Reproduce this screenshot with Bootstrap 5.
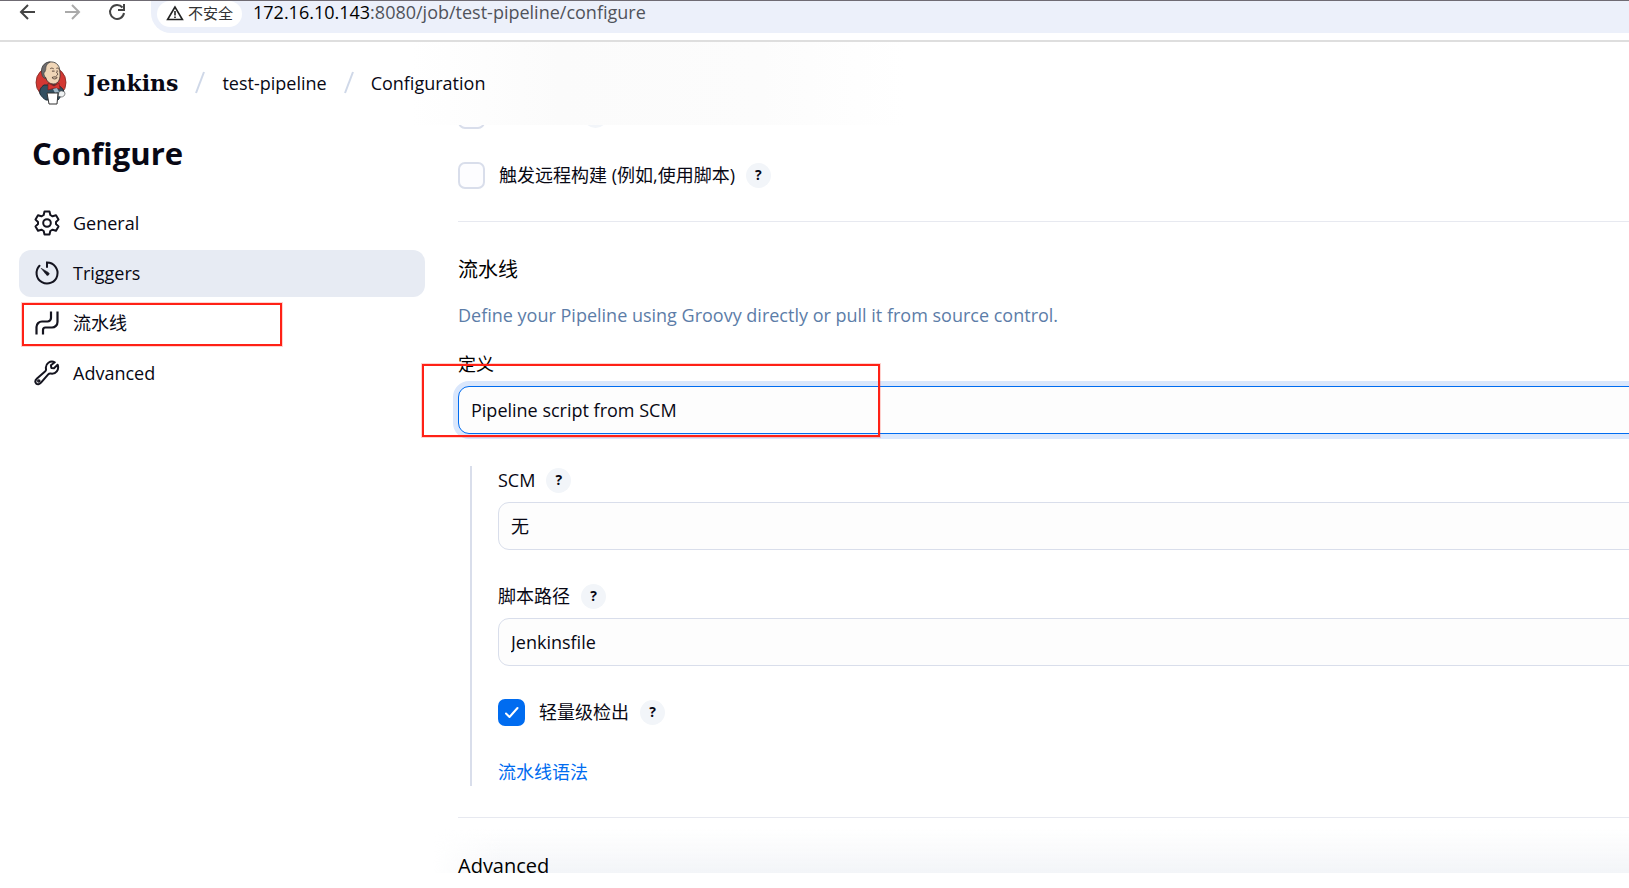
<!DOCTYPE html>
<html lang="zh-CN">
<head>
<meta charset="utf-8">
<meta name="viewport" content="width=device-width, initial-scale=1">
<title>test-pipeline Config [Jenkins]</title>
<link href="https://cdn.jsdelivr.net/npm/bootstrap@5.3.0/dist/css/bootstrap.min.css" rel="stylesheet">
<style>
  :root { --ink: #080814; --line: #d9deeb; --soft: #e7ebf3; --accent: #006cf0; --mark: #ff2116; }
  body { font-family: "Open Sans", "Noto Sans CJK SC", sans-serif; font-size: 18px; line-height: 28px; color: var(--ink); background: #fff; }
  svg { display: block; flex: none; }

  /* browser toolbar */
  .browser-bar { height: 42px; border-top: 1px solid #6f6b73; border-bottom: 2px solid #dedede; padding-left: 18px; }
  .browser-btn { padding: 0; border: 0; background: none; margin-right: 25px; }
  .omnibox { height: 32px; padding: 0 0 6px 6px; background: #ecf0fa; border-radius: 0 0 0 20px; }
  .site-chip { height: 26px; width: 85px; padding: 0 0 2px; border: 0; background: #fff; border-radius: 14px; font-size: 15px; color: #333; }
  .address { border: 0; background: none; outline: 0; font-size: 18px; line-height: 22px; color: #50535a; padding-left: 11px; }
  .address, .site-chip { font-family: inherit; }

  /* page header */
  .app-header { height: 83px; padding: 0 0 2px 35px; background: linear-gradient(90deg, #fff 410px, #fbfbfb 560px, #fcfcfc 760px, #fff 905px); }
  .brand-name { font-family: "DejaVu Serif", serif; font-weight: 700; font-size: 22px; margin-left: 19px; }
  .app-header a { color: var(--ink); }

  /* side navigation */
  .side { width: 425px; padding: 8px 0 0 19px; }
  .side h1 { font-size: 31px; line-height: 40px; font-weight: 700; padding-left: 13px; margin-bottom: 27px; }
  .side .nav { gap: 3px; }
  .side .nav-link { display: flex; align-items: center; gap: 13px; height: 47px; padding: 0 15px 1px; border-radius: 12px; color: var(--ink); }
  .side .nav-link.active { background: var(--soft); }
  .outline-mark { position: absolute; border: 2px solid var(--mark); box-shadow: 0 0 0 1px #ff211633; pointer-events: none; }
  .mark-nav { left: 3px; top: 3px; width: 260px; height: 43px; }
  .mark-field { left: -36px; top: 12px; width: 458px; height: 73px; }

  /* form */
  .content-pane { margin-left: -8px; }
  .form-area { padding-left: 41px; margin-right: -24px; }
  .first-row { margin-top: -24px; }
  .hidden-row-help { margin-left: 98px; }
  .setting-row { height: 28px; margin-bottom: 32px; }
  .setting-row label { margin: 0 11px 0 14px; }
  .form-check-input.box { width: 27px; height: 27px; margin: 0; border: 2px solid var(--line); border-radius: 7px; background-color: #fdfdff; flex: none; }
  .form-check-input.box:checked { background-color: var(--accent); border-color: var(--accent); background-image: url("data:image/svg+xml,%3csvg xmlns='http://www.w3.org/2000/svg' viewBox='0 0 23 23'%3e%3cpath fill='none' stroke='%23fff' stroke-width='2' stroke-linecap='round' stroke-linejoin='round' d='m6 12.500 3.500 3.500 8-9'/%3e%3c/svg%3e"); }
  .help-btn { width: 25px; height: 25px; padding: 0; border: 0; border-radius: 50%; background: #f2f5f9; color: var(--ink); font-size: 14px; line-height: 24px; font-weight: 700; flex: none; }
  .rule { height: 1px; background: #e7e9f0; }
  .form-area h2 { font-size: 20px; line-height: 24px; font-weight: 400; margin: 36px 0 21px; color: #000; }
  .hint { line-height: 24px; margin-bottom: 25px; color: #5c7da8; }
  .form-area .field { height: 48px; padding: 0 12px; font-size: 18px; color: var(--ink); border: 1px solid var(--line); border-radius: 11px; background: #fdfdfd; }
  .form-area .field.picked { border-color: var(--accent); box-shadow: 0 0 0 5px #dae7fc; }
  .def-label { line-height: 24px; margin-bottom: 10px; display: block; color: #000; }
  .nested { margin: 32px 0 31px 12px; padding-left: 26px; border-left: 2px solid var(--line); }
  .field-head { height: 28px; gap: 11px; margin-bottom: 8px; }
  .nested .field { margin-bottom: 32px; }
  .nested a { color: var(--accent); display: block; }
  .save-fade { position: absolute; left: 16px; right: 0; bottom: 0; height: 44px; background: linear-gradient(#f4f6f900, #f3f5f8); -webkit-mask-image: linear-gradient(90deg, transparent, #000 70px); mask-image: linear-gradient(90deg, transparent, #000 70px); pointer-events: none; }
  .page-end { height: 15px; }
</style>
</head>
<body class="d-flex flex-column vh-100 overflow-hidden">

<div class="browser-bar d-flex align-items-start flex-shrink-0">
  <button class="browser-btn" type="button" aria-label="Back"><svg width="20" height="22" viewBox="0 0 20 22" fill="none" stroke="#444" stroke-width="2"><path d="M17 11H3M10 4l-7 7 7 7"/></svg></button>
  <button class="browser-btn" type="button" aria-label="Forward"><svg width="20" height="22" viewBox="0 0 20 22" fill="none" stroke="#aaa" stroke-width="2"><path d="M2 11h14M9 4l7 7-7 7"/></svg></button>
  <button class="browser-btn" type="button" aria-label="Reload"><svg width="18" height="22" viewBox="0 0 18 22" fill="none" stroke="#444" stroke-width="2"><path d="M14.500 6.500A7 7 0 1 0 16 12M16 3v6h-6"/></svg></button>
  <div class="omnibox d-flex flex-grow-1">
    <button class="site-chip d-flex align-items-center justify-content-center" type="button"><svg class="me-1" width="18" height="16" viewBox="0 0 18 16" fill="none" stroke="#222" stroke-width="1.600"><path d="M9 2 1.600 14.500h14.800zM9 6v4.500M9 11.500v1.600"/></svg>不安全</button>
    <div class="address" role="textbox" aria-label="Address"><span class="text-black">172.16.10.143</span>:8080/job/test-pipeline/configure</div>
  </div>
</div>

<header class="app-header d-flex align-items-center flex-shrink-0">
  <a class="d-flex align-items-center text-decoration-none" href="#">
    <svg width="32" height="44" viewBox="0 0 32 44">
      <ellipse cx="16" cy="21.500" rx="15" ry="15.500" fill="#d33833" stroke="#7d2620" stroke-width=".8"/>
      <path d="M9 24c-3 2-5 5-4 9 2 3 4 5 6 6h12l6-8c-1-4-4-6-7-7z" fill="#335061" stroke="#1b2c37" stroke-width="1"/>
      <g transform="translate(2 0) scale(.88 .92)">
        <path d="M6 13C4 5 10 1 16 1c7 0 10 5 10 11 1 6-1 13-7 13-5 0-8-3-9-7-2 0-4-2-4-5z" fill="#f0d6b7" stroke="#333" stroke-width=".9"/>
        <path d="M6 16C3 7 8 1 15 1c-4 2-5 5-5 8l-1 3c-2 0-1 4 1 7-2 0-3-1-4-3z" fill="#6d6b6d" stroke="#333" stroke-width=".6"/>
        <path d="M15 8.500c1-1 2-1 4 0M22 8c1-1 2 0 3 1M17 11h3M22 11h2M22 12c2 2 2 3 0 4M17 18c2-1 5-1 6 0-2 2-4 2-6 0" fill="none" stroke="#4a3930" stroke-width="1"/>
      </g>
      <path d="m13 22 6 3 5-3 1 6-5-1-7 2z" fill="#d33833" stroke="#81201b" stroke-width=".7"/>
      <path d="M18 28l4-1 2 4-4 1z" fill="#9bb3c3"/>
      <path d="M24 31c2-2 5-1 6 1 0 3-2 4-4 4l-3-1z" fill="#eef1f2" stroke="#555" stroke-width=".7"/>
      <path d="M12 32h11l-1 11h-8z" fill="#fff" stroke="#333" stroke-width="1"/>
    </svg>
    <span class="brand-name">Jenkins</span>
  </a>
  <nav class="d-flex align-items-center" aria-label="Breadcrumb">
    <svg class="mx-3" width="12" height="24" viewBox="0 0 12 24"><path d="M10 1 2 22" stroke="#cfd8e8" stroke-width="2"/></svg>
    <a class="text-decoration-none" href="#">test-pipeline</a>
    <svg class="mx-3" width="12" height="24" viewBox="0 0 12 24"><path d="M10 1 2 22" stroke="#cfd8e8" stroke-width="2"/></svg>
    <a class="text-decoration-none" href="#">Configuration</a>
  </nav>
</header>

<div class="d-flex flex-grow-1 overflow-hidden">
  <aside class="side flex-shrink-0">
    <h1>Configure</h1>
    <nav class="nav flex-column">
      <a class="nav-link" href="#general"><svg width="26" height="26" viewBox="0 0 26 26" fill="none" stroke="#14141f" stroke-width="2" stroke-linejoin="round"><path d="M10.500 1.500h5l.8 3.500 2.300 1.300 3.400-1 2.500 4.300-2.500 2.400v2l2.500 2.400-2.500 4.300-3.400-1-2.300 1.300-.8 3.500h-5L9.700 21l-2.300-1.300-3.400 1-2.500-4.300L4 14v-2L1.500 9.600 4 5.300l3.400 1L9.700 5z"/><circle cx="13" cy="13" r="3.800"/></svg>General</a>
      <a class="nav-link active" href="#triggers"><svg width="26" height="26" viewBox="0 0 26 26" fill="none" stroke="#14141f" stroke-width="2" stroke-linecap="round"><path d="M13 7V2.500a10.500 10.500 0 1 1-7.500 3.200"/><path d="M7.500 8.500 14.300 12.400a1.600 1.600 0 1 1-2.200 2.200z" fill="#14141f" stroke="#14141f" stroke-width=".6"/></svg>Triggers</a>
      <div class="position-relative">
        <a class="nav-link" href="#pipeline"><svg width="26" height="26" viewBox="0 0 26 26" fill="none" stroke="#14141f" stroke-width="2.200"><path d="M2.500 24.500V17a5.500 5.500 0 0 1 5.500-5.500h5.500a3.500 3.500 0 0 0 3.500-3.500V1.500M9 24.500V20a2.500 2.500 0 0 1 2.500-2.500H18a5.500 5.500 0 0 0 5.500-5.500V1.500"/></svg>流水线</a>
        <span class="outline-mark mark-nav"></span>
      </div>
      <a class="nav-link" href="#advanced"><svg width="26" height="26" viewBox="0 0 26 26" fill="none" stroke="#14141f" stroke-width="2" stroke-linejoin="round"><path d="M20.800 2.300C16.500.2 11 3.500 12 9c.2 1.200-.1 1.800-1 2.500L3 18.600c-2 1.800-2 3.500-.9 4.800 1.300 1.200 3.200 1.200 4.900-.8l7.200-8.200c.7-.8 1.400-1 2.600-.8 5 .8 8.700-4 6.800-8.900L20 8.200l-2.700-.3-.4-2.700z"/><circle cx="4.800" cy="21" r=".8"/></svg>Advanced</a>
    </nav>
  </aside>

  <main class="content-pane flex-grow-1 overflow-hidden position-relative">
    <div class="save-fade"></div>
    <form class="form-area position-relative">
      <div class="setting-row first-row d-flex align-items-center">
        <input class="form-check-input box" type="checkbox" id="poll" aria-label="Poll SCM">
        <button class="help-btn hidden-row-help" type="button" aria-label="Help"></button>
      </div>
      <div class="setting-row d-flex align-items-center">
        <input class="form-check-input box" type="checkbox" id="remote">
        <label for="remote">触发远程构建 (例如,使用脚本)</label>
        <button class="help-btn" type="button">?</button>
      </div>
      <div class="rule"></div>

      <h2 id="pipeline">流水线</h2>
      <p class="hint">Define your Pipeline using Groovy directly or pull it from source control.</p>
      <div class="position-relative">
        <label class="def-label" for="definition">定义</label>
        <select class="form-select field picked" id="definition"><option>Pipeline script from SCM</option></select>
        <span class="outline-mark mark-field"></span>
      </div>

      <div class="nested">
        <div class="field-head d-flex align-items-center"><label for="scm">SCM</label><button class="help-btn" type="button">?</button></div>
        <select class="form-select field" id="scm"><option>无</option></select>
        <div class="field-head d-flex align-items-center"><label for="script-path">脚本路径</label><button class="help-btn" type="button">?</button></div>
        <input class="form-control field" type="text" id="script-path" value="Jenkinsfile">
        <div class="setting-row d-flex align-items-center">
          <input class="form-check-input box" type="checkbox" id="light" checked>
          <label for="light">轻量级检出</label>
          <button class="help-btn" type="button">?</button>
        </div>
        <a class="text-decoration-none" href="#">流水线语法</a>
      </div>
      <div class="rule"></div>
      <h2 id="advanced">Advanced</h2>
    </form>
  </main>
</div>
<div class="page-end flex-shrink-0"></div>

<script src="https://cdn.jsdelivr.net/npm/bootstrap@5.3.0/dist/js/bootstrap.bundle.min.js"></script>
</body>
</html>
